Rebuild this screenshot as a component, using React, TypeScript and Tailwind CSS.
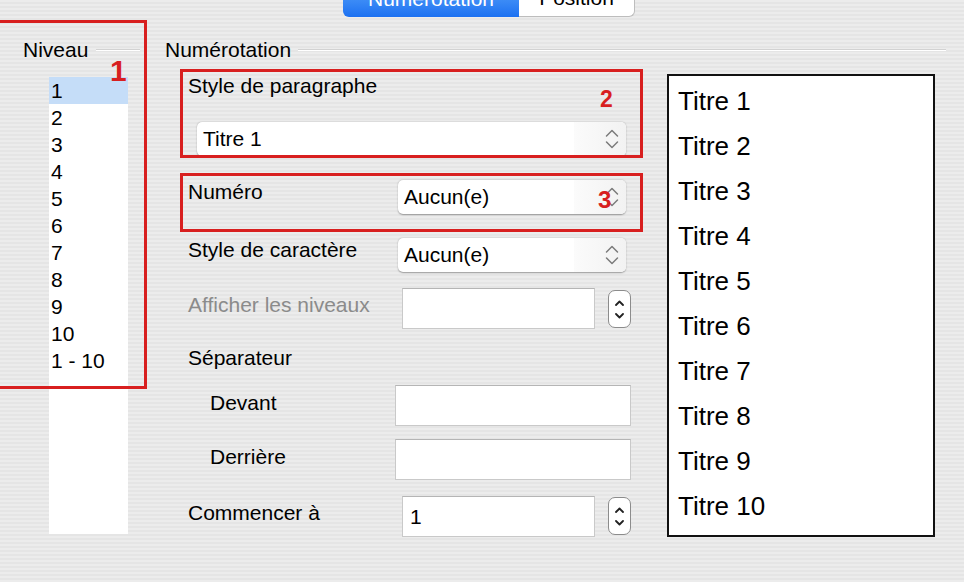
import React from 'react';

const levels = ['1', '2', '3', '4', '5', '6', '7', '8', '9', '10', '1 - 10'];
const titles = Array.from({ length: 10 }, (_, i) => `Titre ${i + 1}`);

function Chevrons() {
  return (
    <svg width="14" height="22" viewBox="0 0 14 22" fill="none" stroke="#7b7b7b" strokeWidth="1.5" strokeLinecap="round" strokeLinejoin="round">
      <path d="M1.5 8 L7 2.5 L12.5 8" />
      <path d="M1.5 14 L7 19.5 L12.5 14" />
    </svg>
  );
}

function Select({ value, width }: { value: string; width: string }) {
  return (
    <div className={`${width} h-[34px] flex items-stretch rounded-[5px] bg-white shadow-[0_0.5px_1.5px_rgba(0,0,0,0.35)] overflow-hidden`}>
      <div className="flex-1 flex items-center pl-[6px] leading-[25px] -mt-[2px]">{value}</div>
      <div className="w-[52px] flex items-center justify-end pr-[7px] bg-gradient-to-r from-[#fbfbfb] to-[#f2f2f2]">
        <Chevrons />
      </div>
    </div>
  );
}

function Stepper() {
  return (
    <div className="w-[23px] h-[38px] rounded-[7px] border border-[#8c8c8c] bg-white flex flex-col items-center justify-center gap-[7px]">
      <svg width="9" height="6" viewBox="0 0 9 6" fill="none" stroke="#222" strokeWidth="1.8" strokeLinecap="round" strokeLinejoin="round">
        <path d="M1 5 L4.5 1.5 L8 5" />
      </svg>
      <svg width="9" height="6" viewBox="0 0 9 6" fill="none" stroke="#222" strokeWidth="1.8" strokeLinecap="round" strokeLinejoin="round">
        <path d="M1 1 L4.5 4.5 L8 1" />
      </svg>
    </div>
  );
}

function Field({ width, value }: { width: string; value?: string }) {
  return (
    <div className={`${width} h-[41px] bg-white border border-[#c9c9c9] border-t-[#b5b5b5] flex items-center pl-[7px] leading-[25px]`}>
      {value}
    </div>
  );
}

function Rule() {
  return (
    <div className="flex-1 flex flex-col">
      <div className="h-px bg-[#d2d2d2]" />
      <div className="h-px bg-white" />
    </div>
  );
}

export default function App() {
  return (
    <div className="relative w-[964px] h-[582px] overflow-hidden text-[21px] text-black font-['Liberation_Sans',Arial,sans-serif] bg-[repeating-linear-gradient(to_bottom,#ececec_0px,#ececec_2px,#e5e5e5_2px,#e5e5e5_4px)]">
      {/* segmented control */}
      <div className="ml-[343px] -mt-[17px] h-[34px] w-[292px] flex">
        <div className="w-[176px] flex items-end justify-center pb-[8px] leading-[20px] text-white rounded-bl-[6px] bg-gradient-to-b from-[#5aa5fa] to-[#1b70f1]">
          Numérotation
        </div>
        <div className="w-[116px] flex items-end justify-center pb-[8px] leading-[20px] bg-white rounded-br-[6px] border-r border-b border-[#bdbdbd]">
          Position
        </div>
      </div>

      <div className="flex mt-[20px]">
        {/* niveau column */}
        <div className="w-[165px] pr-[25px] flex flex-col">
          <div className="h-[25px] flex items-center pl-[23px] leading-[25px]">
            <span>Niveau</span>
            <div className="ml-[8px] flex-1 flex">
              <Rule />
            </div>
          </div>
          <div className="ml-[49px] mt-[15px] w-[79px] h-[457px] bg-white">
            {levels.map((l, i) => (
              <div key={l} className={`h-[27px] leading-[27px] pl-[2px] ${i === 0 ? 'bg-[#c5ddf8]' : ''}`}>
                {l}
              </div>
            ))}
          </div>
        </div>

        {/* numerotation block */}
        <div className="w-[781px] flex flex-col">
          <div className="h-[25px] flex items-center leading-[25px]">
            <span>Numérotation</span>
            <div className="ml-[7px] flex-1 flex">
              <Rule />
            </div>
          </div>

          <div className="flex">
            <div className="w-[502px] pl-[23px] flex flex-col">
              <div className="mt-[11px] h-[25px] leading-[25px]">Style de paragraphe</div>
              <div className="mt-[24px] ml-[9px]">
                <Select value="Titre 1" width="w-[429px]" />
              </div>

              <div className="mt-[24px] flex items-start">
                <div className="w-[210px] leading-[25px] -mt-[1px]">Numéro</div>
                <Select value="Aucun(e)" width="w-[228px]" />
              </div>

              <div className="mt-[24px] flex items-start">
                <div className="w-[210px] leading-[25px] -mt-[1px]">Style de caractère</div>
                <Select value="Aucun(e)" width="w-[228px]" />
              </div>

              <div className="mt-[16px] flex items-start">
                <div className="w-[214px] pt-[4px] leading-[25px] text-[#8b8b8b]">Afficher les niveaux</div>
                <Field width="w-[193px]" />
                <div className="ml-[13px] mt-[2px]">
                  <Stepper />
                </div>
              </div>

              <div className="mt-[16px] h-[25px] leading-[25px]">Séparateur</div>

              <div className="mt-[15px] flex items-start">
                <div className="w-[207px] pl-[22px] pt-[5px] leading-[25px]">Devant</div>
                <Field width="w-[236px]" />
              </div>

              <div className="mt-[13px] flex items-start">
                <div className="w-[207px] pl-[22px] pt-[5px] leading-[25px]">Derrière</div>
                <Field width="w-[236px]" />
              </div>

              <div className="mt-[16px] flex items-start">
                <div className="w-[214px] pt-[4px] leading-[25px]">Commencer à</div>
                <Field width="w-[193px]" value="1" />
                <div className="ml-[13px] mt-[1px]">
                  <Stepper />
                </div>
              </div>
            </div>

            {/* preview */}
            <div className="mt-[12px] w-[268px] h-[463px] border-2 border-[#111] bg-white pl-[9px] pt-[3px] text-[26px]">
              {titles.map((t) => (
                <div key={t} className="h-[45px] leading-[45px]">
                  {t}
                </div>
              ))}
            </div>
          </div>
        </div>
      </div>

      {/* annotations */}
      <div className="absolute left-[-3px] top-[20px] w-[150px] h-[369px] border-[3px] border-[#d81f1f]" />
      <div className="absolute left-[180px] top-[69px] w-[463px] h-[89px] border-[3px] border-[#d81f1f]" />
      <div className="absolute left-[180px] top-[173px] w-[463px] h-[59px] border-[3px] border-[#d81f1f]" />
      <div className="absolute left-[110px] top-[56px] text-[30px] leading-none font-bold text-[#d81f1f]">1</div>
      <div className="absolute left-[600px] top-[88px] text-[23px] leading-none font-bold text-[#d81f1f]">2</div>
      <div className="absolute left-[598px] top-[188px] text-[24px] leading-none font-bold text-[#d81f1f]">3</div>
    </div>
  );
}
